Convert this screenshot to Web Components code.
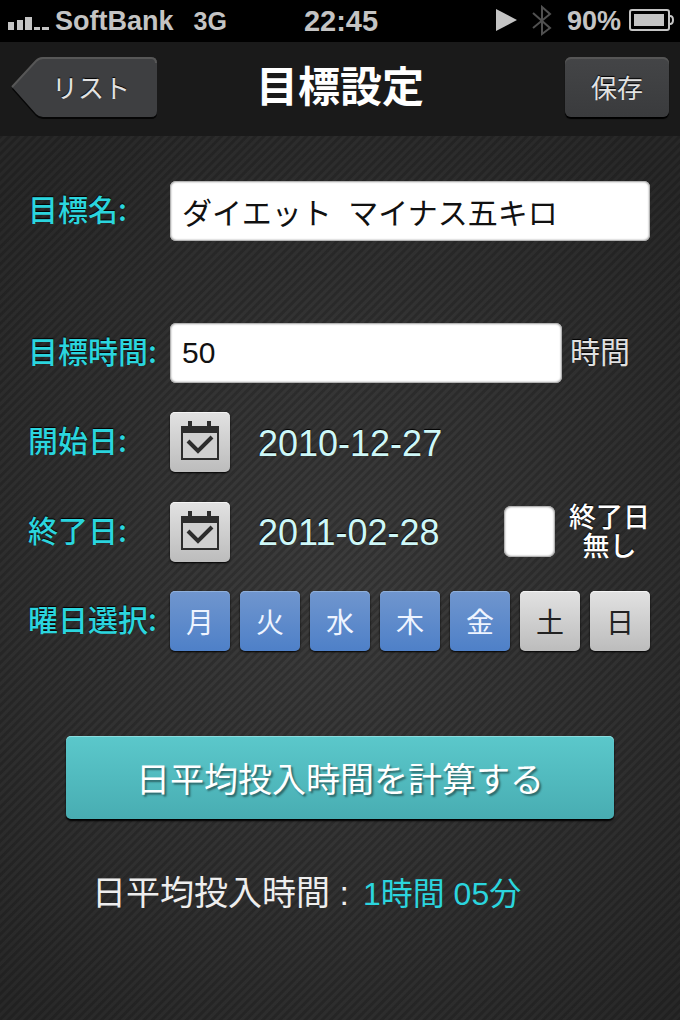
<!DOCTYPE html>
<html lang="ja">
<head>
<meta charset="utf-8">
<meta name="viewport" content="width=device-width, initial-scale=1">
<title>目標設定</title>
<style>
  html, body { margin: 0; min-height: 100%; background: #262626; }
  body {
    --accent: #2bd5de;
    --font: "Liberation Sans", "Noto Sans CJK JP", sans-serif;
    font-family: var(--font);
    color: #fff;
  }
</style>
</head>
<body>
<goal-screen>
  <status-bar slot="status" carrier="SoftBank" network="3G" time="22:45" battery="90%"></status-bar>
  <nav-bar slot="nav">
    <nav-button slot="left" back>リスト</nav-button>
    目標設定
    <nav-button slot="right">保存</nav-button>
  </nav-bar>
  <goal-form></goal-form>
</goal-screen>

<script>
class GoalScreen extends HTMLElement {
  connectedCallback() {
    this.attachShadow({ mode: 'open' });
    this.shadowRoot.innerHTML = `
      <style>
        :host {
          display: flex;
          flex-direction: column;
          min-height: 100vh;
          background:
            repeating-linear-gradient(135deg, rgba(0,0,0,0.18) 0 2px, rgba(0,0,0,0) 3px 5px, rgba(0,0,0,0.18) 6px),
            radial-gradient(ellipse 70% 55% at 50% 58%, #3d3d3d, #282828);
        }
        main { flex: 1; }
      </style>
      <slot name="status"></slot>
      <slot name="nav"></slot>
      <main><slot></slot></main>
    `;
  }
}

class StatusBar extends HTMLElement {
  connectedCallback() {
    this.attachShadow({ mode: 'open' });
    this.shadowRoot.innerHTML = `
      <style>
        :host {
          display: grid;
          grid-template-columns: 1fr auto 1fr;
          align-items: center;
          height: 42px;
          padding: 0 6px 0 8px;
          background: #000;
          color: #c4c4c4;
          font-size: 27px;
          font-weight: 700;
          line-height: 40px;
        }
        .side { display: flex; align-items: center; }
        .right { justify-content: flex-end; }
        .network { margin-left: 20px; font-size: 25px; }
        .time { font-size: 29px; }
        .signal { margin-right: 6px; }
        .bluetooth { margin: 0 15px; }
        .battery { margin-left: 8px; }
        svg { flex-shrink: 0; }
      </style>
      <div class="side">
        <svg class="signal" width="41" height="20" viewBox="0 0 41 20" fill="currentColor">
          <rect x="0" y="11" width="6" height="8"/><rect x="9" y="9" width="6" height="10"/>
          <rect x="17" y="6" width="7" height="13"/><rect x="26" y="16" width="6" height="3"/>
          <rect x="34" y="16" width="7" height="3"/>
        </svg>
        <span>${this.getAttribute('carrier')}</span>
        <span class="network">${this.getAttribute('network')}</span>
      </div>
      <span class="time">${this.getAttribute('time')}</span>
      <div class="side right">
        <svg width="21" height="24" viewBox="0 0 21 24" fill="currentColor"><path d="M0 0L21 11L0 22Z"/></svg>
        <svg class="bluetooth" width="20" height="32" viewBox="0 0 20 32" fill="none" stroke="#505050" stroke-width="2"><path d="M1 8L18 23L10 29V2L18 9L1 23"/></svg>
        <span>${this.getAttribute('battery')}</span>
        <svg class="battery" width="45" height="24" viewBox="0 0 45 24">
          <rect x="1" y="1" width="39" height="20" rx="2" fill="none" stroke="currentColor" stroke-width="2"/>
          <rect x="5" y="5" width="30" height="12" fill="currentColor"/>
          <path d="M41 7Q44 7 44 11Q44 15 41 15" fill="none" stroke="currentColor" stroke-width="2"/>
        </svg>
      </div>
    `;
  }
}

class NavBar extends HTMLElement {
  connectedCallback() {
    this.attachShadow({ mode: 'open' });
    this.shadowRoot.innerHTML = `
      <style>
        :host {
          display: grid;
          grid-template-columns: 1fr auto 1fr;
          align-items: start;
          box-sizing: border-box;
          height: 94px;
          padding: 15px 11px 0;
          background: #1a1a1a;
        }
        h1 {
          margin: 0;
          font-size: 42px;
          font-weight: 700;
          line-height: 62px;
        }
        .right { justify-self: end; }
      </style>
      <div><slot name="left"></slot></div>
      <h1><slot></slot></h1>
      <div class="right"><slot name="right"></slot></div>
    `;
  }
}

class NavButton extends HTMLElement {
  connectedCallback() {
    this.attachShadow({ mode: 'open' });
    this.shadowRoot.innerHTML = `
      <style>
        :host { display: block; }
        button {
          position: relative;
          display: block;
          box-sizing: border-box;
          height: 60px;
          padding: 4px 26px 0;
          border: 0;
          border-radius: 6px;
          background: linear-gradient(#444547, #3a3b3d);
          box-shadow: inset 0 2px 0 #565656, 0 2px 1px #000;
          color: #e2e2e2;
          font: 26px/56px var(--font);
          text-shadow: 0 -1px 1px #000;
        }
        :host([back]) button {
          width: 146px;
          padding: 4px 27px 0 41px;
          background: none;
          box-shadow: none;
        }
        svg { display: none; }
        :host([back]) svg {
          display: block;
          position: absolute;
          inset: 0;
        }
        span { position: relative; }
      </style>
      <button type="button">
        <svg width="146" height="62" viewBox="0 0 146 62">
          <path d="M1 32L25 5Q28 2 32 2H140Q146 2 146 8V56Q146 62 140 62H32Q28 62 25 59Z" fill="#060606"/>
          <path d="M1 30L25 4Q28 0 32 0H140Q146 0 146 6V54Q146 60 140 60H32Q28 60 25 57Z" fill="#3e3f41"/>
          <path d="M1 30L25 4Q28 1 32 1H140Q145 1 145 6" fill="none" stroke="#575757" stroke-width="2"/>
        </svg>
        <span><slot></slot></span>
      </button>
    `;
  }
}

class FormRow extends HTMLElement {
  connectedCallback() {
    this.attachShadow({ mode: 'open' });
    this.shadowRoot.innerHTML = `
      <style>
        :host {
          display: flex;
          align-items: center;
          min-height: 60px;
        }
        .label {
          flex: 0 0 142px;
          padding-bottom: 6px;
          color: var(--accent);
          font-family: "Noto Sans CJK JP", sans-serif;
          font-size: 30px;
          font-weight: 500;
          line-height: 36px;
          white-space: nowrap;
          text-shadow: 0 -1px 1px #000;
        }
        .body { flex: 1; display: flex; align-items: center; min-width: 0; }
      </style>
      <div class="label"><slot name="label"></slot></div>
      <div class="body"><slot></slot></div>
    `;
  }
}

class DateButton extends HTMLElement {
  connectedCallback() {
    this.attachShadow({ mode: 'open' });
    this.shadowRoot.innerHTML = `
      <style>
        :host { display: flex; align-items: center; gap: 28px; }
        button {
          display: grid;
          place-items: center;
          width: 60px;
          height: 60px;
          padding: 0;
          border: 0;
          border-radius: 5px;
          background: linear-gradient(#e2e2e2, #bcbcbc);
          box-shadow: inset 0 1px 0 #f4f4f4, 0 1px 2px #000;
        }
        time {
          padding-top: 3px;
          color: #cff8f8;
          font-size: 36px;
          line-height: 42px;
          text-shadow: 0 -1px 1px #000;
        }
      </style>
      <button type="button" aria-label="${this.getAttribute('name')}">
        <svg width="40" height="42" viewBox="0 0 40 42">
          <rect x="1" y="5" width="38" height="34" fill="#2d2d2d"/>
          <rect x="3" y="12" width="34" height="25" fill="#d0d0d0"/>
          <path d="M10 0V6M29 0V6" stroke="#2d2d2d" stroke-width="4"/>
          <path d="M8 20L18 30L32 16" fill="none" stroke="#2d2d2d" stroke-width="4"/>
        </svg>
      </button>
      <time>${this.getAttribute('value')}</time>
    `;
  }
}

class DayPicker extends HTMLElement {
  connectedCallback() {
    const on = this.getAttribute('selected');
    const days = [...'月火水木金土日'].map(d =>
      `<button type="button" aria-pressed="${on.includes(d)}">${d}</button>`).join('');
    this.attachShadow({ mode: 'open' });
    this.shadowRoot.innerHTML = `
      <style>
        :host { flex: 1; display: flex; gap: 10px; }
        button {
          flex: 1;
          height: 60px;
          padding: 6px 0 0;
          border: 0;
          border-radius: 5px;
          background: linear-gradient(#e2e2e2, #bcbcbc);
          box-shadow: inset 0 1px 0 #f4f4f4, 0 1px 2px #000;
          color: #222;
          font: 28px/54px var(--font);
        }
        button[aria-pressed="true"] {
          background: linear-gradient(#7096ce, #4e80c8);
          box-shadow: inset 0 1px 0 #8fb0dc, 0 1px 2px #000;
          color: #eef4ff;
        }
      </style>
      ${days}
    `;
    this.shadowRoot.addEventListener('click', e => {
      const b = e.target.closest('button');
      if (b) b.setAttribute('aria-pressed', b.getAttribute('aria-pressed') !== 'true');
    });
  }
}

class GoalForm extends HTMLElement {
  connectedCallback() {
    this.attachShadow({ mode: 'open' });
    this.shadowRoot.innerHTML = `
      <style>
        :host { display: block; padding: 45px 30px 40px 28px; }
        form { display: flex; flex-direction: column; gap: 29px; }
        .name { margin-bottom: 53px; }
        input[type="text"] {
          flex: 1;
          min-width: 0;
          box-sizing: border-box;
          height: 60px;
          padding: 0 12px;
          border: 0;
          border-radius: 6px;
          background: #fff;
          box-shadow: inset 0 0 2px 1px #999;
          color: #111;
          font: 30px/40px var(--font);
          white-space: pre;
          outline: 0;
        }
        .unit {
          width: 80px;
          margin-left: 8px;
          font-size: 30px;
          line-height: 36px;
          color: #e0e0e0;
          text-shadow: 0 -1px 1px #000;
        }
        .no-end {
          display: flex;
          align-items: center;
          gap: 14px;
          margin-left: auto;
          font-size: 27px;
          font-weight: 500;
          line-height: 29px;
          text-align: center;
          text-shadow: 0 -1px 1px #000;
        }
        .no-end span { padding-top: 3px; }
        input[type="checkbox"] {
          appearance: none;
          width: 51px;
          height: 51px;
          margin: 0;
          border-radius: 7px;
          background: #fff;
          box-shadow: inset 0 0 2px 1px #999;
        }
        input[type="checkbox"]:checked { background: #5b8bd0; }
        .calc {
          height: 83px;
          margin: 56px 36px 0 38px;
          padding: 4px 0 0;
          border: 0;
          border-radius: 5px;
          background: linear-gradient(#5bc8cb, #48adb2);
          box-shadow: inset 0 1px 0 #8adcde, 0 2px 2px #000;
          color: #fff;
          font: 34px/48px var(--font);
          text-shadow: 2px 2px 2px rgba(0,0,0,0.45);
        }
        .result {
          display: flex;
          align-items: baseline;
          gap: 14px;
          margin: 21px 0 0 64px;
          font-size: 34px;
          line-height: 48px;
          color: #eee;
        }
        output { color: var(--accent); font-size: 32px; }
      </style>
      <form>
        <form-row class="name">
          <label slot="label" for="name">目標名:</label>
          <input type="text" id="name" value="ダイエット  マイナス五キロ">
        </form-row>
        <form-row>
          <label slot="label" for="hours">目標時間:</label>
          <input type="text" id="hours" inputmode="numeric" value="50">
          <span class="unit">時間</span>
        </form-row>
        <form-row>
          <span slot="label">開始日:</span>
          <date-button name="開始日" value="2010-12-27"></date-button>
        </form-row>
        <form-row>
          <span slot="label">終了日:</span>
          <date-button name="終了日" value="2011-02-28"></date-button>
          <label class="no-end"><input type="checkbox"><span>終了日<br>無し</span></label>
        </form-row>
        <form-row>
          <span slot="label">曜日選択:</span>
          <day-picker selected="月火水木金"></day-picker>
        </form-row>
        <button type="button" class="calc">日平均投入時間を計算する</button>
        <div class="result"><span>日平均投入時間 :</span><output>1時間 05分</output></div>
      </form>
    `;
  }
}

customElements.define('goal-screen', GoalScreen);
customElements.define('status-bar', StatusBar);
customElements.define('nav-bar', NavBar);
customElements.define('nav-button', NavButton);
customElements.define('form-row', FormRow);
customElements.define('date-button', DateButton);
customElements.define('day-picker', DayPicker);
customElements.define('goal-form', GoalForm);
</script>
</body>
</html>
